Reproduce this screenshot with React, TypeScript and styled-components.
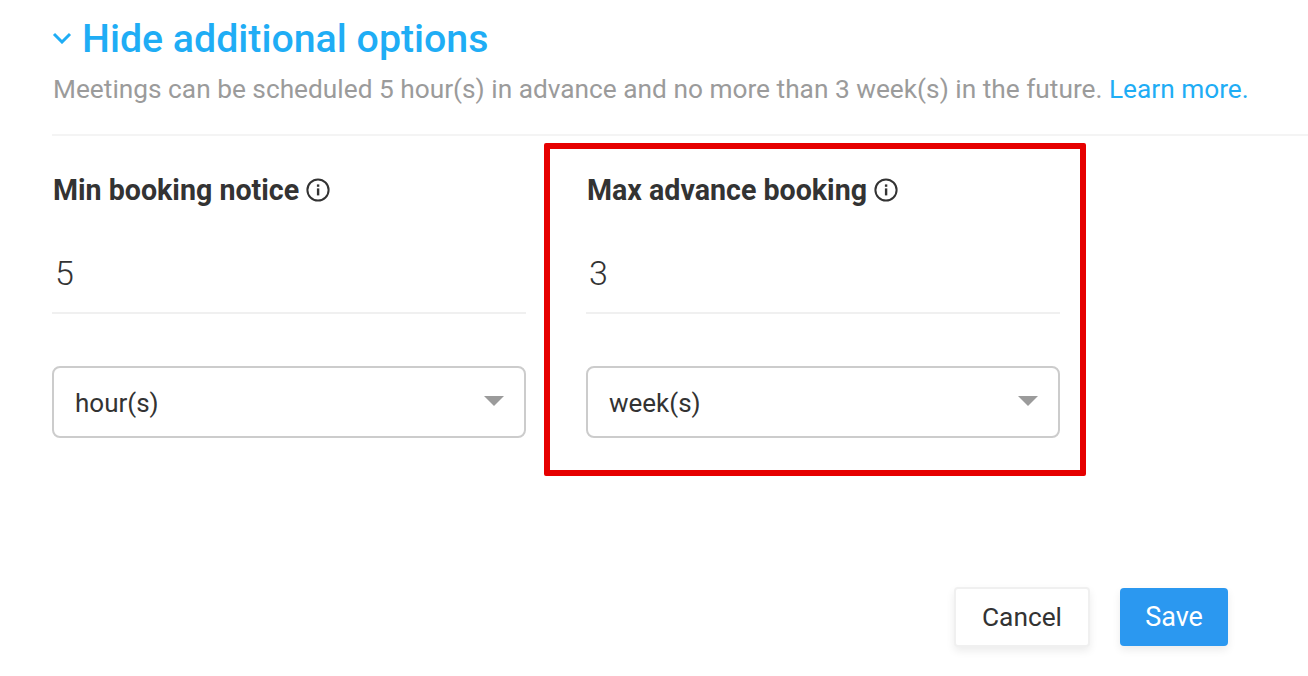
import React from "react";
import styled, { createGlobalStyle } from "styled-components";

const Global = createGlobalStyle`
  html, body { margin: 0; padding: 0; background: #fff; overflow: hidden; }
  body { font-family: Roboto, "Liberation Sans", sans-serif; }
`;
const Page = styled.div`
  position: relative;
  width: 1308px;
  height: 676px;
  box-sizing: border-box;
  padding: 15px 0 0 52px;
  overflow: hidden;
`;
const Toggle = styled.div`
  display: flex;
  align-items: center;
  gap: 10px;
  height: 48px;
  color: #1fadf5;
  font-size: 39.3px;
  font-weight: 500;
  line-height: 48px;
`;
const Chevron = styled.svg`
  width: 20px;
  height: 12px;
  flex: none;
  margin-top: -3px;
`;
const Summary = styled.p`
  margin: 7px 0 0 1px;
  color: #9b9b9b;
  font-size: 26.27px;
  line-height: 38px;
  white-space: nowrap;
`;
const Link = styled.a`
  color: #1fadf5;
`;
const Divider = styled.div`
  height: 2px;
  margin-top: 26px;
  background: #f4f4f4;
`;
const Columns = styled.div`
  display: grid;
  grid-template-columns: 474px 474px;
  column-gap: 60px;
  padding-top: 35px;
`;
const Field = styled.div`
  display: flex;
  flex-direction: column;
`;
const Label = styled.div`
  display: flex;
  align-items: center;
  gap: 7px;
  height: 38px;
  padding-left: 1px;
  color: #333;
  font-size: 28.6px;
  font-weight: 700;
`;
const InfoIcon = styled.svg`
  width: 24px;
  height: 24px;
  flex: none;
`;
const NumberValue = styled.div`
  height: 76px;
  margin-top: 29px;
  padding: 10px 0 0 3px;
  box-sizing: border-box;
  border-bottom: 2px solid #f0f0f0;
  color: #333;
  font-size: 34px;
  font-weight: 300;
  line-height: 50px;
`;
const Select = styled.div`
  display: flex;
  align-items: center;
  justify-content: space-between;
  box-sizing: border-box;
  height: 72px;
  margin-top: 52px;
  padding: 2px 20px 0 21px;
  border: 2px solid #ccc;
  border-radius: 8px;
  color: #333;
  font-size: 26px;
`;
const Caret = styled.span`
  width: 0;
  height: 0;
  border-left: 10px solid transparent;
  border-right: 10px solid transparent;
  border-top: 10px solid #9b9b9b;
  margin-top: -4px;
`;
const Actions = styled.div`
  display: flex;
  justify-content: flex-end;
  align-items: center;
  gap: 30px;
  margin-top: 149px;
  padding-right: 80px;
`;
const BaseButton = styled.button`
  height: 60px;
  box-sizing: border-box;
  border-radius: 4px;
  font-family: inherit;
  box-shadow: 0 4px 8px rgba(0, 0, 0, 0.08);
`;
const CancelButton = styled(BaseButton)`
  width: 136px;
  background: #fff;
  border: 2px solid #f0f0f0;
  color: #333;
  font-size: 26.3px;
`;
const SaveButton = styled(BaseButton)`
  width: 108px;
  height: 58px;
  background: #2b98f0;
  border: 0;
  color: #fff;
  font-size: 27px;
`;
const Highlight = styled.div`
  position: absolute;
  left: 544px;
  top: 143px;
  width: 542px;
  height: 333px;
  box-sizing: border-box;
  border: 6px solid #e60000;
  border-radius: 2px;
  pointer-events: none;
`;

const Info = () => (
  <InfoIcon viewBox="0 0 24 24" fill="none">
    <circle cx="12" cy="12" r="10.6" stroke="#333" strokeWidth="2" />
    <rect x="10.9" y="10.4" width="2.4" height="7" fill="#333" />
    <rect x="10.9" y="6.4" width="2.4" height="2.4" fill="#333" />
  </InfoIcon>
);

const BookingField = ({ label, value, unit }: { label: string; value: string; unit: string }) => (
  <Field>
    <Label>
      {label}
      <Info />
    </Label>
    <NumberValue>{value}</NumberValue>
    <Select>
      {unit}
      <Caret />
    </Select>
  </Field>
);

export default function App() {
  return (
    <Page>
      <Global />
      <Toggle>
        <Chevron viewBox="0 0 20 12" fill="none">
          <path d="M2 2l8 8 8-8" stroke="#1fadf5" strokeWidth="3" />
        </Chevron>
        Hide additional options
      </Toggle>
      <Summary>
        Meetings can be scheduled 5 hour(s) in advance and no more than 3 week(s) in the future.{" "}
        <Link>Learn more.</Link>
      </Summary>
      <Divider />
      <Columns>
        <BookingField label="Min booking notice" value="5" unit="hour(s)" />
        <BookingField label="Max advance booking" value="3" unit="week(s)" />
      </Columns>
      <Actions>
        <CancelButton>Cancel</CancelButton>
        <SaveButton>Save</SaveButton>
      </Actions>
      <Highlight />
    </Page>
  );
}
